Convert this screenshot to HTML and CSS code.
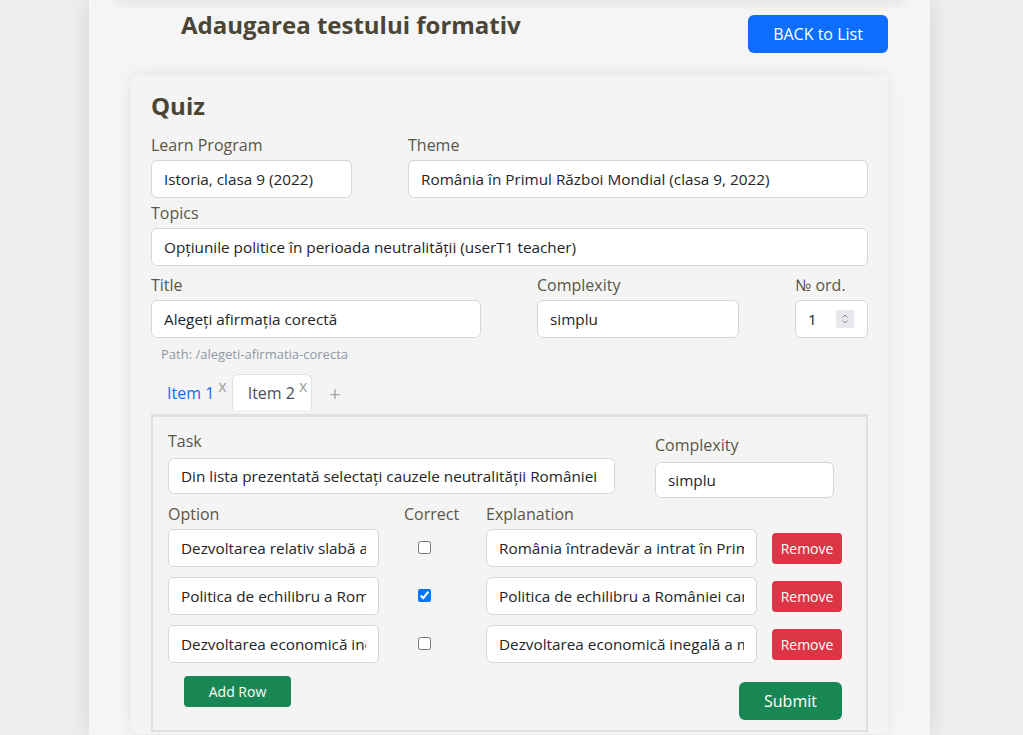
FILE: index.html
```html
<!DOCTYPE html>
<html lang="ro">
<head>
<meta charset="utf-8">
<title>Adaugarea testului formativ</title>
<link rel="stylesheet" href="styles.css">
</head>
<body>
<div class="page">
  <div class="top-shadow"></div>
  <header class="head">
    <h1 class="page-title">Adaugarea testului formativ</h1>
    <button class="btn btn-primary btn-back">BACK to List</button>
  </header>

  <section class="card">
    <h2 class="card-title">Quiz</h2>

    <div class="row">
      <div class="field w-program">
        <label class="lbl">Learn Program</label>
        <input class="ctl" value="Istoria, clasa 9 (2022)">
      </div>
      <div class="field grow">
        <label class="lbl">Theme</label>
        <input class="ctl" value="România în Primul Război Mondial (clasa 9, 2022)">
      </div>
    </div>

    <div class="field topics">
      <label class="lbl">Topics</label>
      <input class="ctl" value="Opțiunile politice în perioada neutralității (userT1 teacher)">
    </div>

    <div class="row row-title">
      <div class="field w-title">
        <label class="lbl">Title</label>
        <input class="ctl" value="Alegeți afirmația corectă">
      </div>
      <div class="field w-complex">
        <label class="lbl">Complexity</label>
        <input class="ctl" value="simplu">
      </div>
      <div class="field grow">
        <label class="lbl">№ ord.</label>
        <div class="ctl numbox">
          <span class="num">1</span>
          <span class="spin"><svg width="18" height="18" viewBox="0 0 18 18"><path d="M6.5 7.5 L9 5 L11.5 7.5" fill="none" stroke="#8a8a8a" stroke-width="1"/><path d="M6.5 10.5 L9 13 L11.5 10.5" fill="none" stroke="#8a8a8a" stroke-width="1"/></svg></span>
        </div>
      </div>
    </div>

    <p class="path">Path: /alegeti-afirmatia-corecta</p>

    <nav class="tabs">
      <div class="tab"><span class="tab-link">Item 1</span><span class="tab-x">x</span></div>
      <div class="tab active"><span class="tab-text">Item 2</span><span class="tab-x">x</span></div>
      <span class="tab-add">+</span>
    </nav>

    <div class="panel">
      <div class="task-row">
        <div class="field task-col">
          <label class="lbl">Task</label>
          <input class="ctl ctl-36" value="Din lista prezentată selectați cauzele neutralității României la începutul Primului Război Mondial">
        </div>
        <div class="field task-cx">
          <label class="lbl">Complexity</label>
          <input class="ctl ctl-36" value="simplu">
        </div>
      </div>

      <div class="opt-grid opt-head">
        <span class="lbl">Option</span>
        <span class="lbl">Correct</span>
        <span class="lbl">Explanation</span>
        <span></span>
      </div>
      <div class="opt-grid opt-rows">
        <input class="ctl opt-in" value="Dezvoltarea relativ slabă a armatei române">
        <input type="checkbox" class="chk">
        <input class="ctl exp-in" value="România întradevăr a intrat în Primul Război Mondial nepregătită">
        <button class="btn btn-danger btn-remove">Remove</button>

        <input class="ctl opt-in" value="Politica de echilibru a României între cele două blocuri">
        <input type="checkbox" class="chk" checked>
        <input class="ctl exp-in" value="Politica de echilibru a României care a urmărit realizarea idealului național">
        <button class="btn btn-danger btn-remove">Remove</button>

        <input class="ctl opt-in" value="Dezvoltarea economică inegală a provinciilor">
        <input type="checkbox" class="chk">
        <input class="ctl exp-in" value="Dezvoltarea economică inegală a marilor puteri">
        <button class="btn btn-danger btn-remove">Remove</button>
      </div>

      <div class="panel-foot">
        <button class="btn btn-success btn-add">Add Row</button>
        <button class="btn btn-success btn-submit">Submit</button>
      </div>
    </div>
  </section>
</div>
</body>
</html>
```

FILE: styles.css
```css
* { box-sizing: border-box; }

body {
  margin: 0;
  background: #efefef;
  font-family: "Open Sans", "Noto Sans", sans-serif;
  color: #5b5646;
}

.page {
  width: 841px;
  min-height: 735px;
  margin-left: 89px;
  padding: 0 42px;
  background: #f5f5f5;
  box-shadow: 0 0 24px rgba(0, 0, 0, 0.12);
}

.top-shadow {
  height: 0;
  margin: 0 -12px;
  box-shadow: 0 0 10px 3px rgba(0, 0, 0, 0.1);
}

.head {
  display: flex;
  justify-content: space-between;
  align-items: flex-start;
  height: 75px;
  padding-left: 50px;
}

.page-title {
  margin: 10px 0 0;
  font-size: 24px;
  line-height: 29px;
  font-weight: 700;
  color: #4a4535;
}

.btn {
  border: 0;
  padding: 0;
  color: #fff;
  font-family: "Open Sans", "Noto Sans", sans-serif;
  font-size: 16px;
  border-radius: 6px;
  display: inline-flex;
  align-items: center;
  justify-content: center;
  cursor: pointer;
}

.btn-primary { background: #0d6efd; }
.btn-danger { background: #dc3545; }
.btn-success { background: #198754; }

.btn-back {
  margin-top: 15px;
  width: 140px;
  height: 38px;
}

.card {
  background: #f4f4f4;
  border-radius: 6px;
  box-shadow: 0 0 16px rgba(0, 0, 0, 0.08);
  padding: 16px 20px 2px;
}

.card-title {
  margin: 0 0 13px;
  font-size: 24px;
  line-height: 29px;
  font-weight: 700;
  color: #4a4535;
}

.row {
  display: flex;
  gap: 56px;
}

.grow { flex: 1; }
.w-program { width: 201px; }
.w-title { width: 330px; }
.w-complex { width: 202px; }

.lbl {
  display: block;
  font-size: 16px;
  line-height: 24px;
  color: #5b5646;
}

.field .lbl { margin-bottom: 3px; }

.ctl {
  display: block;
  width: 100%;
  height: 38px;
  border: 1px solid #d3d7dc;
  border-radius: 6px;
  background: #fff;
  padding: 0 12px;
  font-family: "Open Sans", "Noto Sans", sans-serif;
  font-size: 15.3px;
  color: #212529;
  outline: none;
}

.ctl-36 { height: 36px; }

.topics { margin-top: 3px; }
.row-title { margin-top: 7px; }

.numbox {
  display: flex;
  align-items: center;
  justify-content: space-between;
  padding: 0 13px 0 12px;
}

.spin {
  display: flex;
  width: 18px;
  height: 18px;
  background: #e9e9ed;
  border-radius: 2px;
}

.path {
  margin: 8px 0 0;
  padding-left: 10px;
  font-size: 13px;
  line-height: 16px;
  color: #8e98a8;
}

.tabs {
  margin-top: 12px;
  height: 40px;
  display: flex;
  align-items: flex-start;
}

.tab {
  display: flex;
  align-items: baseline;
  padding: 6px 4px 5px 15px;
  line-height: 24px;
  font-size: 16px;
  border: 1px solid transparent;
  border-bottom: 0;
  border-radius: 6px 6px 0 0;
}

.tab.active {
  background: #fff;
  border-color: #dee2e6;
}

.tab-link { color: #0d6efd; }
.tab-text { color: #495057; }

.tab-x {
  margin-left: 4px;
  color: #a0a0a0;
  font-size: 16px;
  line-height: 16px;
  vertical-align: top;
  transform: translateY(-7px);
}

.tab-add {
  margin-left: 17px;
  padding-top: 8px;
  font-size: 20px;
  line-height: 24px;
  color: #a8a8a8;
}

.panel {
  border: 2px solid #e0e0e0;
  border-top-width: 3px;
  padding: 12px 24px 10px 15px;
}

.task-row {
  display: flex;
  align-items: flex-start;
}

.task-col { width: 447px; }
.task-cx { width: 179px; margin-left: 40px; margin-top: 4px; }
.task-row .lbl { margin-bottom: 5px; }

.opt-grid {
  display: grid;
  grid-template-columns: 236px 82px 286px 70px;
  align-items: center;
}

.opt-head { margin-top: 4px; margin-bottom: 3px; }
.opt-rows { row-gap: 10px; }

.opt-in { width: 211px; }
.exp-in { width: 271px; }

.chk {
  margin: 0 0 2px 14px;
  width: 13px;
  height: 13px;
}

.btn-remove {
  width: 70px;
  height: 31px;
  font-size: 14px;
  border-radius: 4px;
}

.panel-foot {
  margin-top: 13px;
  display: flex;
  justify-content: space-between;
  align-items: flex-start;
}

.btn-add {
  margin-left: 16px;
  width: 107px;
  height: 31px;
  font-size: 14px;
  border-radius: 4px;
}

.btn-submit {
  margin-top: 6px;
  width: 103px;
  height: 38px;
}
```
